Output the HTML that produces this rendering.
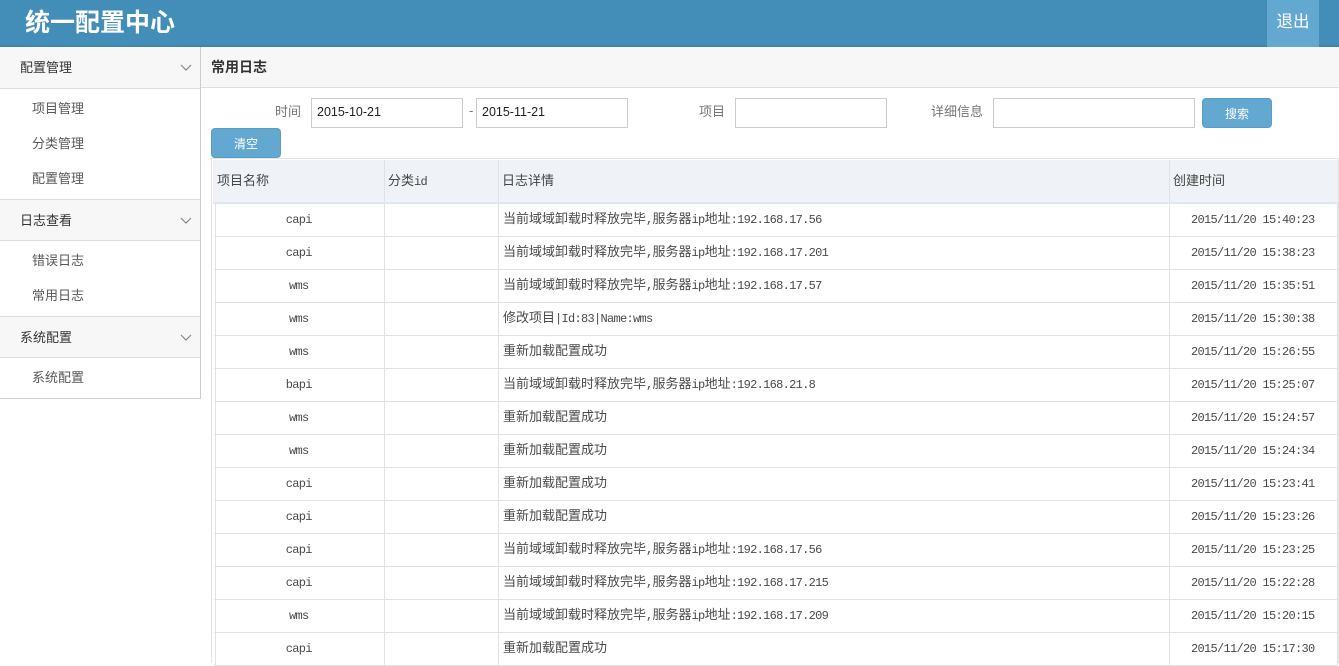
<!DOCTYPE html>
<html lang="zh"><head><meta charset="utf-8"><title>统一配置中心</title>
<style>
*{box-sizing:border-box}
html,body{margin:0;padding:0;width:1339px;height:663px;overflow:hidden;background:#fff;font-family:"Liberation Sans","Noto Sans CJK SC",sans-serif;font-size:13px;color:#555}
.a{position:absolute;white-space:nowrap}
#top{left:0;top:0;width:1339px;height:47px;background:#438eb9;border-bottom:2px solid #3d85ad}
#logo{left:25px;top:6px;font-size:25px;line-height:34px;font-weight:bold;color:#fff}
#out{left:1267px;top:0;width:52px;height:47px;background:#62a8d1;color:#fff;font-size:16.5px;line-height:45px;text-align:center}
#side{left:0;top:47px;width:201px;height:352px;border-right:1px solid #ccc;border-bottom:1px solid #ccc}
.h{position:absolute;left:0;width:200px;height:42px;background:#f7f7f7;border-bottom:1px solid #ddd;color:#333;line-height:41px;padding-left:20px;font-size:13px}
.h.t{border-top:1px solid #ddd}
.h svg{position:absolute;left:180px;top:16px}
.s{position:absolute;left:32px;line-height:20px;color:#585858}
#bar{left:201px;top:47px;width:1138px;height:41px;background:#f7f7f7;border-bottom:1px solid #ddd;color:#333;font-weight:bold;line-height:40px;padding-left:10px;font-size:14px}
.l{color:#777;line-height:20px}
.i{position:absolute;height:30px;border:1px solid #ccc;background:#fff;color:#222;font-size:12.5px;line-height:26px;padding-left:5px}
.b{position:absolute;width:70px;height:30px;background:#62a8d1;border:1px solid #5a9cc4;border-radius:4px;color:#fff;text-align:center;line-height:30px;font-size:12px}
#box{left:211px;top:158px;width:1128px;height:505px;border:1px solid #e4e4e4;border-bottom:0}
table{position:absolute;left:213px;top:160px;width:1124px;border-collapse:collapse;table-layout:fixed;color:#444}
th{height:43px;background:#eff3f8;font-weight:normal;text-align:left;padding:0 0 4px 3px;border:1px solid #dde2e8;border-top:0;border-bottom:2px solid #dfe8f1;color:#444;font-size:13px;font-family:"Liberation Sans","Noto Sans CJK SC",sans-serif}
th:first-child{border-left-color:#eff3f8}
th:last-child{border-right-color:#eff3f8}
th i{font-style:normal;font-family:"Liberation Mono",monospace;font-size:12px;letter-spacing:-.7px}
td{height:33px;padding:0 0 5px 4px;border:1px solid #e2e2e2;border-top:0;white-space:nowrap;overflow:hidden;font-size:13px;color:#4a4a4a;font-family:"Noto Sans CJK SC",monospace}
td:first-child{border-left:0;background:linear-gradient(#e2e2e2,#e2e2e2) 1px 0/1px 100% no-repeat}
td i{font-style:normal;font-family:"Liberation Mono",monospace;font-size:12px;letter-spacing:-.7px}
td.c{text-align:center;padding:0 0 5px}
td.r{padding-left:21px}
</style></head><body>
<div class="a" id="top"></div>
<div class="a" id="logo">统一配置中心</div>
<div class="a" id="out">退出</div>
<div class="a" id="side">
<div class="h" style="top:0">配置管理<svg width="12" height="10" viewBox="0 0 12 10"><path d="M1 2l5 5 5-5" fill="none" stroke="#888" stroke-width="1.2"/></svg></div>
<div class="s" style="top:52px">项目管理</div><div class="s" style="top:87px">分类管理</div><div class="s" style="top:122px">配置管理</div>
<div class="h t" style="top:152px">日志查看<svg width="12" height="10" viewBox="0 0 12 10"><path d="M1 2l5 5 5-5" fill="none" stroke="#888" stroke-width="1.2"/></svg></div>
<div class="s" style="top:204px">错误日志</div><div class="s" style="top:239px">常用日志</div>
<div class="h t" style="top:269px">系统配置<svg width="12" height="10" viewBox="0 0 12 10"><path d="M1 2l5 5 5-5" fill="none" stroke="#888" stroke-width="1.2"/></svg></div>
<div class="s" style="top:321px">系统配置</div>
</div>
<div class="a" id="bar">常用日志</div>
<div class="a l" style="left:275px;top:102px">时间</div>
<div class="i" style="left:311px;top:98px;width:152px">2015-10-21</div>
<div class="a" style="left:469px;top:103px;color:#777;line-height:16px">-</div>
<div class="i" style="left:476px;top:98px;width:152px">2015-11-21</div>
<div class="a l" style="left:699px;top:102px">项目</div>
<div class="i" style="left:735px;top:98px;width:152px"></div>
<div class="a l" style="left:931px;top:102px">详细信息</div>
<div class="i" style="left:993px;top:98px;width:202px"></div>
<div class="b" style="left:1202px;top:98px;line-height:31px">搜索</div>
<div class="b" style="left:211px;top:128px">清空</div>
<div class="a" id="box"></div>
<table>
<colgroup><col style="width:171px"><col style="width:114px"><col style="width:671px"><col style="width:168px"></colgroup>
<tr><th>项目名称</th><th>分类<i>id</i></th><th>日志详情</th><th>创建时间</th></tr>
<tr><td class="c"><i>capi</i></td><td></td><td>当前域域卸载时释放完毕<i>,</i>服务器<i>ip</i>地址<i>:192.168.17.56</i></td><td class="r"><i>2015/11/20 15:40:23</i></td></tr>
<tr><td class="c"><i>capi</i></td><td></td><td>当前域域卸载时释放完毕<i>,</i>服务器<i>ip</i>地址<i>:192.168.17.201</i></td><td class="r"><i>2015/11/20 15:38:23</i></td></tr>
<tr><td class="c"><i>wms</i></td><td></td><td>当前域域卸载时释放完毕<i>,</i>服务器<i>ip</i>地址<i>:192.168.17.57</i></td><td class="r"><i>2015/11/20 15:35:51</i></td></tr>
<tr><td class="c"><i>wms</i></td><td></td><td>修改项目<i>|Id:83|Name:wms</i></td><td class="r"><i>2015/11/20 15:30:38</i></td></tr>
<tr><td class="c"><i>wms</i></td><td></td><td>重新加载配置成功</td><td class="r"><i>2015/11/20 15:26:55</i></td></tr>
<tr><td class="c"><i>bapi</i></td><td></td><td>当前域域卸载时释放完毕<i>,</i>服务器<i>ip</i>地址<i>:192.168.21.8</i></td><td class="r"><i>2015/11/20 15:25:07</i></td></tr>
<tr><td class="c"><i>wms</i></td><td></td><td>重新加载配置成功</td><td class="r"><i>2015/11/20 15:24:57</i></td></tr>
<tr><td class="c"><i>wms</i></td><td></td><td>重新加载配置成功</td><td class="r"><i>2015/11/20 15:24:34</i></td></tr>
<tr><td class="c"><i>capi</i></td><td></td><td>重新加载配置成功</td><td class="r"><i>2015/11/20 15:23:41</i></td></tr>
<tr><td class="c"><i>capi</i></td><td></td><td>重新加载配置成功</td><td class="r"><i>2015/11/20 15:23:26</i></td></tr>
<tr><td class="c"><i>capi</i></td><td></td><td>当前域域卸载时释放完毕<i>,</i>服务器<i>ip</i>地址<i>:192.168.17.56</i></td><td class="r"><i>2015/11/20 15:23:25</i></td></tr>
<tr><td class="c"><i>capi</i></td><td></td><td>当前域域卸载时释放完毕<i>,</i>服务器<i>ip</i>地址<i>:192.168.17.215</i></td><td class="r"><i>2015/11/20 15:22:28</i></td></tr>
<tr><td class="c"><i>wms</i></td><td></td><td>当前域域卸载时释放完毕<i>,</i>服务器<i>ip</i>地址<i>:192.168.17.209</i></td><td class="r"><i>2015/11/20 15:20:15</i></td></tr>
<tr><td class="c"><i>capi</i></td><td></td><td>重新加载配置成功</td><td class="r"><i>2015/11/20 15:17:30</i></td></tr>
</table>
</body></html>
